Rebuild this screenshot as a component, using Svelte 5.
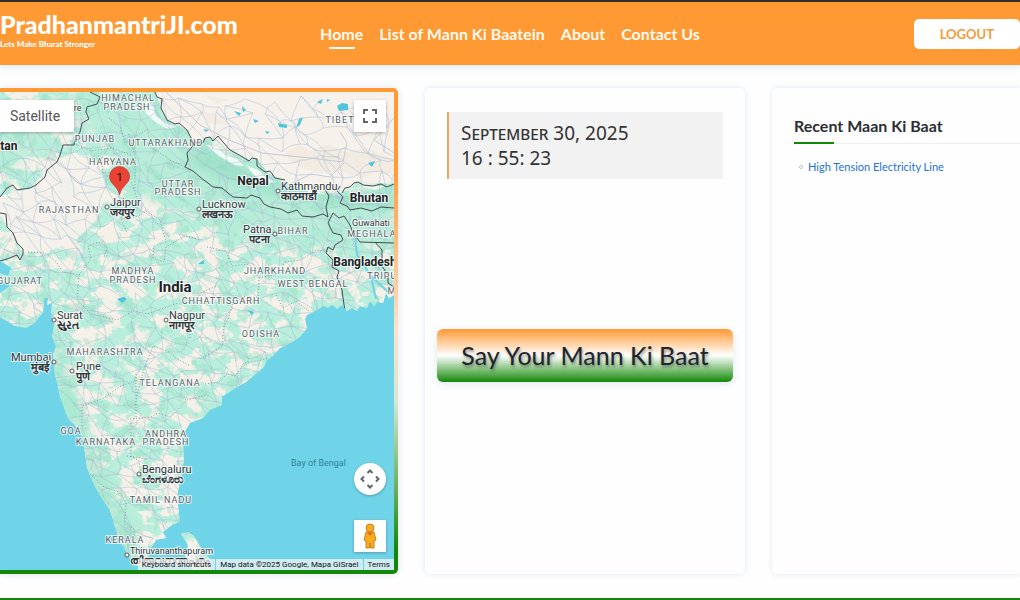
<script lang="ts">
  const navItems = ["Home", "List of Mann Ki Baatein", "About", "Contact Us"];
  const recent = ["High Tension Electricity Line"];

  const land =
    "M0 92H394V295L389 298L386 293L383 303L377 302L374 307L370 301L367 308L360 306L357 311L352 308L347 311L342 305L337 309L332 305L328 308L324 306L317 310L307 315L305 319L307 328L300 337L290 343L280 348L273 356L267 360L264 367L257 373L246 382L237 387L222 397L222 405L210 410L203 418L190 423L185 431L183 440L184 457L182 477L178 490L178 506L180 522L172 525L163 532L166 538L156 540L152 547L147 560L143 567L133 565L127 553L120 541L115 527L110 510L103 500L97 490L91 478L87 467L85 453L82 437L75 425L68 419L65 410L60 397L57 382L54 370L53 355L56 346L52 337L54 324L51 312L52 303L47 305L48 298L44 298L43 312L35 323L26 328L15 326L7 321L0 317V293L10 286L7 283L0 282V273L8 276L11 268L4 263L0 261Z";
  const sriLanka = "M181 534L188 532L194 536L201 548L211 560V570H193L185 557L188 545Z";
  const tibet =
    "M155 92L162 110L167 120L187 130L193 142L210 137L220 142L230 150L250 160L257 158L267 172L280 180L300 188L327 193L342 193L358 182L394 184V92Z";
  const desert = "M0 196L30 188L57 160L75 152L100 168L108 192L96 220L76 240L52 250L23 253L7 227L0 213Z";

  const borders = [
    "M90 92L100 97L97 104L87 107L86 112L89 119L82 123L80 132L75 140L74 145L63 145L60 155L57 162L47 170L45 177L36 185L30 188L17 190L13 185L7 188L0 197",
    "M0 213L6 214L7 227L13 233L17 243L23 249L23 254L20 260L17 255L7 259L0 261",
    "M155 92L157 97L162 99L161 108L167 120L175 124L179 123L187 130L193 142L203 143L205 138L210 137L213 141L218 136L223 142L230 150L241 156L249 161L252 158L257 159L257 166L265 172L270 171L275 178L285 180",
    "M193 142L192 147L187 153L188 160L185 167L193 171L200 177L213 187L222 188L233 197L247 198L251 195L260 198L264 204L270 207L281 209L288 213L297 210L302 216L313 217L323 214L328 217L326 207L329 196L325 190",
    "M342 193L345 188L350 187L354 183L358 182L363 185L373 186L381 184L387 187L394 184M340 186L337 191L343 197L340 203L347 206L350 210L361 208L372 211L381 207L394 208",
    "M333 213L328 223L333 233L341 235L343 240L335 245L333 250L328 247M333 213L339 218L344 216L350 225L353 233L360 242L394 243M328 247L326 253L333 260L332 267L339 271L337 277L342 290L343 298L345 311M375 242L382 250V266L388 275V283L394 287",
  ];

  const stateLines = [
    "M73 143L91 151L112 148L131 155M109 118L121 128L125 143L136 136L148 129",
    "M101 157L103 173L116 171L132 183L137 199L124 204L121 219L127 233",
    "M129 134L135 156L135 190M153 148L170 160L185 167",
    "M28 252L45 253L57 263L63 272L79 275L77 300L91 314L117 320L133 311L147 314L164 308L178 303",
    "M79 275L91 259L88 246L99 242L107 248L104 257M121 219L139 216L146 211L160 220L166 242L154 246L153 258L164 262L166 247L185 236L202 240",
    "M207 247L226 251L232 266L249 264L259 278L258 297L235 296L228 319L224 326L222 347L202 358",
    "M259 278L278 274L285 262L301 260L317 250L332 252M276 295L283 308L296 301L309 311",
    "M135 405L141 379L145 366L153 346L169 352L178 359L190 366M82 426V406L104 398L119 387L137 380",
    "M205 384L219 382L227 374L235 376L244 363L257 361L268 358M190 338V312L202 292L217 286",
    "M136 374V417L131 422V456L139 461L142 483M90 474L104 487L119 492L126 502L125 522L134 529V553",
    "M130 419L151 417L158 413L171 417L187 400L207 395M127 456L147 459",
  ];

  const lakes = "M234 111l7 2-2 3zM242 106l4 4-3 2zM253 119l6 2-4 2zM278 123l9 2v3l-8-1zM299 119l4-2-3 8-4 3zM317 102l6-3-2 5zM337 106l5-3 6 1v6l-9 1zM327 99l3 1-3 2zM265 131l5 1-3 2zM203 129l6 1-3 2zM368 163l7-2-3 6zM334 167l1 5zM117 299l7-2 3 2-5 4zM247 310l7 2-2 3zM198 264l6-4v4z";

  const stateLabels = [
    ["HIMACHAL", 128, 101], ["PRADESH", 127, 110], ["PUNJAB", 95, 142],
    ["UTTARAKHAND", 166, 146], ["HARYANA", 113, 165], ["UTTAR", 178, 187],
    ["PRADESH", 178, 195], ["RAJASTHAN", 69, 213], ["TIBET", 340, 123],
    ["BIHAR", 293, 234], ["MEGHALAYA", 378, 237], ["GUJARAT", 20, 284],
    ["MADHYA", 133, 274], ["PRADESH", 133, 283], ["JHARKHAND", 275, 274],
    ["WEST BENGAL", 313, 287], ["TRIPURA", 389, 279], ["CHHATTISGARH", 221, 304],
    ["ODISHA", 261, 337], ["MAHARASHTRA", 105, 355], ["TELANGANA", 170, 386],
    ["GOA", 71, 434], ["KARNATAKA", 106, 445], ["ANDHRA", 166, 437],
    ["PRADESH", 166, 445], ["TAMIL NADU", 161, 503], ["KERALA", 125, 543],
    ["M", 392, 294],
  ] as [string, number, number][];

  // name, local name, text x, baseline, dot x, dot y
  const cities = [
    ["Jaipur", "जयपुर", 110, 206, 107, 207],
    ["Lucknow", "लखनऊ", 202, 208, 199, 209],
    ["Kathmandu", "काठमाडौं", 281, 190, 278, 191],
    ["Patna", "पटना", 243, 233, 275, 234],
    ["Surat", "સુરત", 57, 319, 54, 320],
    ["Nagpur", "नागपूर", 169, 319, 166, 320],
    ["Mumbai", "मुंबई", 11, 361, 54, 362],
    ["Pune", "पुणे", 76, 370, 72, 371],
    ["Bengaluru", "ಬೆಂಗಳೂರು", 142, 473, 139, 474],
    ["Thiruvananthapuram", "തിരുവനന്തപുരം", 130, 554, 127, 555],
  ] as [string, string, number, number, number, number][];

  const countries = [
    ["Nepal", 253, 185, 12], ["Bhutan", 369, 202, 12], ["Bangladesh", 365, 266, 12],
    ["India", 175, 292, 15], ["Pakistan", -6, 150, 12],
  ] as [string, number, number, number][];

  let seed = 41;
  const random = () => {
    seed = (seed * 16807) % 2147483647;
    return seed / 2147483647;
  };

  const buildRoads = () => {
    const nodes: number[][] = [];
    for (let y = 96; y < 570; y += 15) {
      for (let x = 0; x < 400; x += 16) {
        nodes.push([Math.round(x + random() * 14), Math.round(y + random() * 13)]);
      }
    }
    let d = "";
    nodes.forEach(([x, y], i) => {
      for (const step of [1, 25, 26]) {
        const next = nodes[i + step];
        if (!next || Math.abs(next[0] - x) > 40 || random() < 0.25) continue;
        const cx = Math.round((x + next[0]) / 2 + random() * 8 - 4);
        const cy = Math.round((y + next[1]) / 2 + random() * 8 - 4);
        d += `M${x} ${y}Q${cx} ${cy} ${next[0]} ${next[1]}`;
      }
    });
    return d;
  };

  const roads = buildRoads();
</script>

<div class="page">
  <header>
    <a class="brand" href="#home">
      <span class="name">PradhanmantriJI.com</span>
      <span class="tagline">Lets Make Bharat Stronger</span>
    </a>
    <nav>
      {#each navItems as item, i}
        <a href="#{i}" class:active={i === 0}>{item}</a>
      {/each}
    </nav>
    <button class="logout">LOGOUT</button>
  </header>

  <main>
    <section class="map-frame">
      <div class="map">
        <svg class="canvas" viewBox="0 92 394 478" preserveAspectRatio="xMaxYMid slice">
          <defs>
            <clipPath id="land"><path d={land} /><path d={sriLanka} /></clipPath>
            <filter id="patches" x="0" y="0" width="100%" height="100%" color-interpolation-filters="sRGB">
              <feTurbulence type="fractalNoise" baseFrequency="0.05 0.07" numOctaves="4" seed="8" />
              <feColorMatrix values="0 0 0 0 0.96  0 0 0 0 0.94  0 0 0 0 0.91  12 0 0 0 -5.8" />
            </filter>
            <filter id="forest" x="0" y="0" width="100%" height="100%" color-interpolation-filters="sRGB">
              <feTurbulence type="fractalNoise" baseFrequency="0.08" numOctaves="3" seed="21" />
              <feColorMatrix values="0 0 0 0 0.57  0 0 0 0 0.86  0 0 0 0 0.75  0 12 0 0 -7" />
            </filter>
            <filter id="soften"><feGaussianBlur stdDeviation="4" /></filter>
          </defs>
          <rect x="-400" y="-300" width="1200" height="1300" fill="#70d4e8" />
          <g clip-path="url(#land)">
            <rect y="92" width="394" height="478" fill="#b8eedb" />
            <rect y="92" width="394" height="478" filter="url(#patches)" />
            <path d="M92 92H155L193 142L250 162L327 193L394 186V246L328 247L250 245L190 215L130 190L110 150L84 125Z" fill="#b4ecd8" opacity=".9" filter="url(#soften)" />
            <path d="M0 171L28 158L55 132L85 118V92H60L40 108L0 130Z" fill="#b0ebd5" opacity=".7" filter="url(#soften)" />
            <path d="M54 325L66 360L77 405L93 440L108 482L133 532L127 560L100 510L80 460L50 370Z" fill="#a4e6ce" opacity=".7" filter="url(#soften)" />
            <rect y="92" width="394" height="478" filter="url(#forest)" opacity=".35" />
            <path d={desert} fill="#f6f1eb" opacity=".92" />
            <path d={tibet} fill="#f6f2eb" />
            <path d="M195 144L232 157L285 186L340 195L394 187V210L345 207L280 199L215 178L188 162Z" fill="#8edabd" opacity=".5" filter="url(#soften)" />
            <path class="snow" d="M145 101l8 5 3 10 9 7 11 4-8 2-13-7-9-9zM207 145l10 2 8 8 12 4 7 7-9-1-16-9zM246 165l12 5 8 7 10 5-8 1-14-8zM302 187l15 4 8 3-15-1zM358 185l13 2 13-1-8 4z" />
            <path d="M285 153l14-8 12 6 17-7 19 8 22-4 25 12v16l-19-3-13 5-21-7-24 2-23-9zM197 110l18 4 13 11-20-2zM205 95l24 5-13 4z" fill="#eee6da" opacity=".6" />
            <path d={roads} class="roads" />
            <path d="M166 92L200 125L229 140L262 153L310 158L343 162L347 143L340 132M394 118L374 140L394 153M293 183L311 174L330 177L344 163" class="tibet-line" />
            <path d={lakes} fill="#51c4dd" />
            <path d="M355 238L357 255L371 276L376 299M371 276L388 292" class="river" />
            {#each stateLines as line}
              <path d={line} class="state-line" />
            {/each}
            {#each borders as border}
              <path d={border} class="border" />
            {/each}
          </g>

          {#each stateLabels as [name, x, y]}
            <text class="state" {x} {y}>{name}</text>
          {/each}
          {#each cities as [name, local, x, y, dotX, dotY]}
            <circle cx={dotX} cy={dotY} r="2" class="dot" />
            <text class="city" class:small={name.length > 12} {x} {y}>{name}</text>
            <text class="city local" x={name === "Mumbai" ? x + 20 : name === "Patna" ? x + 6 : x} y={y + 10}>{local}</text>
          {/each}
          <text class="city small" x="352" y="226">Guwahati</text>
          <text class="city small" x="54" y="111">Lahore</text>
          {#each countries as [name, x, y, size]}
            <text class="country" font-size={size} {x} {y}>{name}</text>
          {/each}
          <text class="sea" x="291" y="466">Bay of Bengal</text>

          <path d="M119.500 195C118 186 109.500 184 109.500 176.500A10 10 0 0 1 129.500 176.500C129.500 184 121 186 119.500 195Z" fill="#ea4335" stroke="#c5221f" stroke-width=".6" />
          <text class="pin" x="119.500" y="181">1</text>
        </svg>

        <button class="control satellite">Satellite</button>
        <button class="control fullscreen" aria-label="Toggle fullscreen view">
          <svg viewBox="0 0 14 14" width="14" height="14">
            <path d="M1 5V1H5M9 1H13V5M13 9V13H9M5 13H1V9" fill="none" stroke="#666" stroke-width="2" />
          </svg>
        </button>
        <button class="control camera" aria-label="Map camera controls">
          <svg viewBox="0 0 20 20" width="20" height="20">
            <path d="M7.500 4L10 1.500L12.500 4M16 7.500L18.500 10L16 12.500M12.500 16L10 18.500L7.500 16M4 12.500L1.500 10L4 7.500" fill="none" stroke="#666" stroke-width="2" />
          </svg>
        </button>
        <button class="control pegman" aria-label="Street View">
          <svg viewBox="0 0 16 26" width="16" height="26">
            <path d="M4 9L2 17L4 18V25H7.500L8 20L8.500 25H12V18L14 17L12 9Z" fill="#f9ab1e" stroke="#c88422" />
            <circle cx="8" cy="5" r="4" fill="#f9ab1e" stroke="#c88422" />
            <path d="M5 9.500L8 13L11 9.500Z" fill="#df6f20" />
          </svg>
        </button>
        <div class="credits">
          <button>Keyboard shortcuts</button>
          <span>Map data ©2025 Google, Mapa GISrael</span>
          <a href="#terms">Terms</a>
        </div>
      </div>
    </section>

    <section class="card">
      <div class="clock">
        <div>September 30, 2025</div>
        <div>16 : 55: 23</div>
      </div>
      <button class="say">Say Your Mann Ki Baat</button>
    </section>

    <section class="card recent">
      <h2>Recent Maan Ki Baat</h2>
      <ul>
        {#each recent as title}
          <li><a href="#recent">{title}</a></li>
        {/each}
      </ul>
    </section>
  </main>
  <footer></footer>
</div>

<style>
  :global(body) {
    background: #fefefe;
    font-family: Lato, sans-serif;
  }

  .page {
    display: flex;
    flex-direction: column;
    min-height: 100vh;
  }

  a {
    text-decoration: none;
  }

  button {
    border: 0;
    font-family: inherit;
    cursor: pointer;
  }

  header {
    display: grid;
    grid-template-columns: 1fr auto 1fr;
    align-items: center;
    box-sizing: border-box;
    height: 65px;
    border-top: 2px solid #302d2a;
    background: #ff9933;
    box-shadow: 0 2px 8px #dce8f0;
  }

  .brand {
    display: flex;
    flex-direction: column;
    color: #fff;
    font-weight: 900;
    padding-bottom: 10px;
  }

  .name {
    font-size: 25px;
    line-height: 30px;
  }

  .tagline {
    font-size: 8px;
    line-height: 10px;
  }

  nav {
    display: flex;
    gap: 16px;
  }

  nav a {
    position: relative;
    color: #fffaf0;
    font-size: 16px;
    font-weight: 700;
    line-height: 24px;
  }

  nav a.active::after {
    content: "";
    position: absolute;
    left: 20%;
    right: 20%;
    bottom: -3px;
    height: 2px;
    background: #fff;
  }

  .logout {
    justify-self: end;
    height: 30px;
    padding: 0 26px;
    border-radius: 5px;
    background: #fff;
    color: #f79a3b;
    font-size: 13px;
    font-weight: 700;
  }

  main {
    flex: 1;
    display: grid;
    grid-template-columns: minmax(0, 398fr) minmax(0, 320fr) minmax(0, 248fr);
    column-gap: 27px;
    padding: 23px 0 24px;
  }

  .map-frame {
    display: flex;
    padding: 4px 4px 4px 0;
    border-radius: 0 5px 5px 0;
    background: linear-gradient(#ff9933 15%, #fde2cc 50%, #d5e6d0 65%, #138808 95%);
    box-shadow: 0 0 8px #dfe8f2;
  }

  .map {
    position: relative;
    flex: 1;
    overflow: hidden;
    font-family: Roboto, sans-serif;
  }

  .canvas {
    position: absolute;
    width: 100%;
    height: 100%;
  }

  .roads {
    fill: none;
    stroke: #a9bdd6;
    stroke-width: 1;
    opacity: 0.5;
  }

  .tibet-line {
    fill: none;
    stroke: #c4c8d6;
  }

  .snow {
    fill: #f3faf7;
  }

  .river {
    fill: none;
    stroke: #70d4e8;
    stroke-width: 2;
  }

  .state-line {
    fill: none;
    stroke: #86999b;
    stroke-width: 1;
    stroke-dasharray: 1 2;
  }

  .border {
    fill: none;
    stroke: #434c4e;
    stroke-width: 1;
  }

  .dot {
    fill: #fff;
    stroke: #555;
  }

  text {
    fill: #2f363a;
    stroke: #fffc;
    stroke-width: 2px;
    stroke-linejoin: round;
    paint-order: stroke;
  }

  .state {
    fill: #566064;
    font-size: 9px;
    letter-spacing: 1px;
    text-anchor: middle;
  }

  .city {
    font-size: 11px;
  }

  .city.small {
    font-size: 9px;
  }

  .city.local {
    font-size: 11px;
    font-weight: 700;
  }

  .country {
    fill: #202124;
    font-weight: 700;
    text-anchor: middle;
  }

  .sea {
    fill: #2d8398;
    stroke: none;
    font-size: 9px;
  }

  .pin {
    fill: #111;
    stroke: none;
    font-size: 11px;
    text-anchor: middle;
  }

  .control {
    position: absolute;
    right: 8px;
    display: grid;
    place-items: center;
    width: 32px;
    height: 32px;
    padding: 0;
    background: #fff;
    box-shadow: 0 1px 3px #0004;
  }

  .satellite {
    left: 0;
    top: 8px;
    width: 74px;
    padding-right: 4px;
    color: #565656;
    font-size: 14px;
  }

  .fullscreen {
    top: 8px;
  }

  .camera {
    bottom: 75px;
    border-radius: 50%;
  }

  .pegman {
    bottom: 18px;
  }

  .credits {
    position: absolute;
    right: 0;
    bottom: 0;
    display: flex;
    gap: 1px;
    font-size: 8px;
    line-height: 11px;
  }

  .credits > * {
    padding: 0 4px;
    background: #f5f5f5b8;
    color: #111;
    font-size: 8px;
    line-height: 11px;
  }

  .card {
    padding: 24px 12px;
    border-radius: 5px;
    background: #fefefe;
    box-shadow: 0 0 6px #dfe8f2;
  }

  .clock {
    margin: 0 10px;
    padding: 9px 12px 8px;
    border-left: 2px solid #f2a45c;
    background: #f2f2f2;
    color: #333;
    font-family: "Noto Sans", sans-serif;
    font-size: 19px;
    font-variant: small-caps;
    line-height: 25px;
  }

  .say {
    width: 100%;
    height: 53px;
    margin-top: 150px;
    padding: 0 0 2px;
    border-radius: 6px;
    background: linear-gradient(#ff9933, #fff 50%, #138808);
    box-shadow: 0 2px 8px #dfe8f2;
    color: #212529;
    font-size: 25px;
    text-shadow: 1px 2px 3px #0006;
  }

  .recent {
    padding: 26px 0 24px 22px;
    border-radius: 5px 0 0 5px;
  }

  h2 {
    position: relative;
    margin: 0;
    padding-bottom: 5px;
    border-bottom: 1px solid #eceff2;
    color: #2b2f33;
    font-size: 16px;
    line-height: 24px;
  }

  h2::after {
    content: "";
    position: absolute;
    left: 0;
    bottom: -1px;
    width: 40px;
    height: 2px;
    background: #138808;
  }

  ul {
    margin: 15px 0 0;
    padding: 0;
    list-style: none;
  }

  li {
    display: flex;
    align-items: center;
    gap: 5px;
    padding-left: 5px;
    font-size: 11px;
    line-height: 16px;
  }

  li::before {
    content: "";
    width: 2px;
    height: 2px;
    border: 1px solid #b9cad8;
    border-radius: 50%;
  }

  li a {
    color: #1a73d9;
  }

  footer {
    height: 2px;
    background: #138808;
  }
</style>
